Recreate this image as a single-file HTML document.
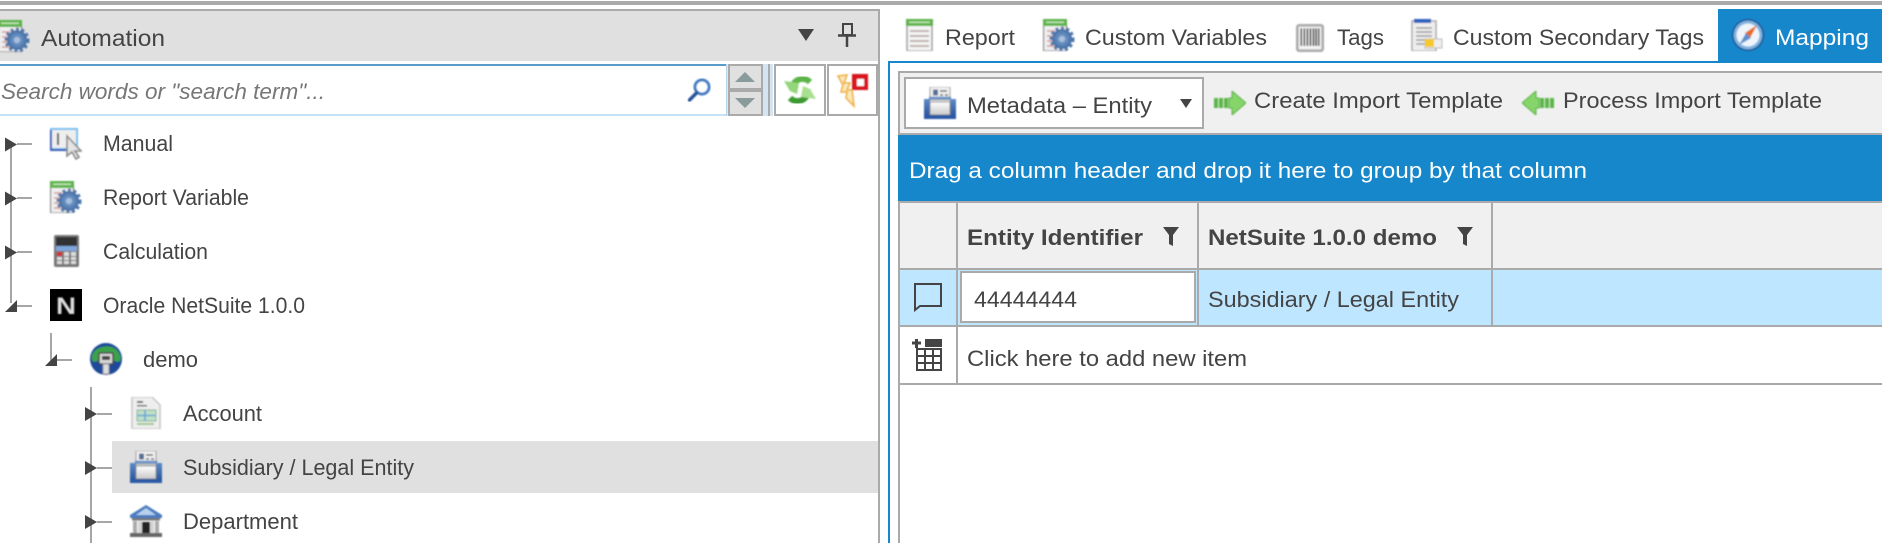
<!DOCTYPE html>
<html lang="en"><head><meta charset="utf-8"><title>Automation</title>
<style>
html,body{margin:0;padding:0;background:#fff;width:1882px;height:543px;overflow:hidden}
svg{display:block}
text{font-family:"Liberation Sans",sans-serif;font-size:22.5px;fill:#444}
.i{filter:url(#b)}
</style></head><body>
<svg width="1882" height="543" viewBox="0 0 1882 543" xmlns="http://www.w3.org/2000/svg">
<defs>
<filter id="b" x="-10%" y="-10%" width="120%" height="120%"><feGaussianBlur stdDeviation="0.7"/></filter>
<radialGradient id="gear" cx="50%" cy="50%" r="55%"><stop offset="0" stop-color="#a9c0dc"/><stop offset=".35" stop-color="#6a92c4"/><stop offset="1" stop-color="#3f689e"/></radialGradient>
<linearGradient id="gray" x1="0" y1="0" x2="0" y2="1"><stop offset="0" stop-color="#fff"/><stop offset="1" stop-color="#c8c8c8"/></linearGradient>
<linearGradient id="blu" x1="0" y1="0" x2="0" y2="1"><stop offset="0" stop-color="#5d8bc6"/><stop offset="1" stop-color="#1f4d95"/></linearGradient>
<symbol id="report" viewBox="0 0 32 32">
 <rect x="1" y="6" width="25" height="26" fill="#f4f4f4" stroke="#999" stroke-width="1.400"/><rect x="0" y="0" width="27" height="7" fill="#5cb34a"/><rect x="3" y="2.500" width="21" height="1.500" fill="#c4e6b8"/>
 <path d="M4 12h19M4 17h19M4 22h19M4 27h19" stroke="#b09a9a" stroke-width="1.500"/>
</symbol>
<symbol id="repgear" viewBox="0 0 32 32">
 <rect x="0.500" y="6" width="23" height="26" fill="#f0f0f0" stroke="#888" stroke-width="1.400"/><rect x="0" y="0" width="24" height="7" fill="#5cb34a"/><rect x="3" y="2.500" width="18" height="1.500" fill="#c4e6b8"/>
 <path d="M4 12h8M4 17h6M4 22h6M4 27h8" stroke="#d09a9a" stroke-width="1.500"/>
 <circle cx="19" cy="20" r="10" fill="url(#gear)"/><circle cx="19" cy="20" r="11" fill="none" stroke="#4a74a8" stroke-width="3" stroke-dasharray="3 2.600"/><circle cx="19" cy="20" r="3" fill="#a9bfda"/>
</symbol>
<symbol id="manual" viewBox="0 0 32 32">
 <rect x="1" y="1" width="26" height="20" fill="#eee" stroke="#78bff0" stroke-width="2"/><path d="M0 21h27v2H0zM0 2h2v20H0z" fill="#3a5fb8"/><rect x="7" y="5" width="2" height="12" fill="#555"/>
 <path d="M17 8v20l5-4 4 7 3-2-4-6h6z" fill="#e4e4e4" stroke="#888" stroke-width="1.600"/>
</symbol>
<symbol id="calc" viewBox="0 0 32 32">
 <rect x="4" y="0" width="25" height="32" rx="2" fill="#777"/><rect x="6" y="2" width="21" height="9" fill="#333"/><rect x="6" y="11" width="21" height="5" fill="#7fa6dc"/>
 <path d="M7 17h5v4H7z" fill="#d83030"/><path d="M14 17h5v4h-5zM21 17h5v4h-5zM7 22h5v3H7zM14 22h5v3h-5zM21 22h5v3h-5zM7 26h5v3H7zM14 26h5v3h-5zM21 26h5v3h-5z" fill="#ddd"/>
</symbol>
<symbol id="globe" viewBox="0 0 32 32">
 <circle cx="16" cy="16" r="16" fill="#1f4a9a"/><path d="M3 10C8 2 24 0 29 10c3 5 2 8-1 9-3-2-20-2-24 0C1 17 1 14 3 10z" fill="#3aa24a"/><rect x="9" y="10" width="14" height="11" rx="1" fill="#d8d8d8" stroke="#444" stroke-width="1.500"/><rect x="12" y="13" width="8" height="4" fill="#444"/><path d="M13 21h6v10h-6z" fill="#ddd" stroke="#889" stroke-width="1"/>
</symbol>
<symbol id="doc" viewBox="0 0 32 32">
 <path d="M2 0h20l8 8v24H2z" fill="#eee" stroke="#c4c4c4" stroke-width="1.500"/><path d="M7 4h6v2H7zM7 8h10v1.500H7z" fill="#666"/><rect x="7" y="13" width="19" height="11" fill="#bfe0c8" stroke="#7cb38c"/><path d="M7 18.500h19M15 13v11" stroke="#6aa5d8" stroke-width="1.600"/><path d="M7 27h17" stroke="#9cc98c" stroke-width="2"/>
</symbol>
<symbol id="entity" viewBox="0 0 32 32">
 <rect x="6" y="0" width="20" height="13" fill="#f2f2f2" stroke="#999"/><rect x="9" y="2.500" width="5" height="6" fill="#5a6f93"/><path d="M16 4h7M16 8h3M21 8h3" stroke="#666" stroke-width="1.500"/>
 <path d="M0 12h6v20H0zM26 12h6v20h-6z" fill="url(#blu)"/><rect x="6" y="15" width="20" height="13" fill="url(#gray)" stroke="#888"/><rect x="0" y="28" width="32" height="4" fill="#2a5aa5"/><path d="M5 11h22" stroke="#5d8bc6" stroke-width="2.500"/>
</symbol>
<symbol id="dept" viewBox="0 0 32 32">
 <path d="M16 0L0 10v3h32v-3z" fill="#4a7cc0"/><path d="M16 3L6 10h20z" fill="#b8d2ee"/><rect x="2" y="13" width="28" height="2.500" fill="#777"/>
 <path d="M3 16h4v12H3zM25 16h4v12h-4z" fill="#aaa"/><path d="M8 16h4v12H8zM20 16h4v12h-4z" fill="#d4d4d4"/><rect x="12" y="17" width="8" height="11" fill="#222"/><rect x="0" y="28" width="32" height="4" fill="#666"/>
</symbol>
<symbol id="tag" viewBox="0 0 32 32">
 <rect x="1.500" y="1.500" width="29" height="29" rx="2" fill="#f4f4f4" stroke="#aaa" stroke-width="3"/>
 <path d="M6 5v20M9.500 5v20M13 5v20M16.500 5v20M20 5v20M23 5v20M26 5v20" stroke="#333" stroke-width="1.800"/>
</symbol>
<symbol id="cst" viewBox="0 0 32 32">
 <path d="M1 2h24v30H1z" fill="#eee" stroke="#aaa" stroke-width="1.500"/><rect x="3" y="0" width="17" height="4" fill="#2f62c0"/><path d="M5 9h16M5 13h16M5 17h16M5 21h12M5 25h10" stroke="#999" stroke-width="1.500"/><rect x="14" y="20" width="17" height="9" fill="#eee" stroke="#bbb"/><rect x="14" y="20" width="9" height="8" fill="#f5c92c"/>
</symbol>
<symbol id="compass" viewBox="0 0 32 32">
 <circle cx="16" cy="16" r="16" fill="#1a4f93"/><circle cx="16" cy="16" r="14.500" fill="#7fb4e0"/><circle cx="16" cy="16" r="11.500" fill="#eef4fa"/><path d="M25 6L18 19l-5-5z" fill="#e86a22"/><path d="M7 26l7-12 5 5z" fill="#5f8fcf"/>
</symbol>
<symbol id="arrR" viewBox="0 0 32 24">
 <path d="M0 7h4v10H0zM5 7h4v10H5zM10 7h4v10h-4z" fill="#5cb648"/><path d="M15 7h3V0l14 12-14 12v-7h-3z" fill="#85d56a" stroke="#55b040" stroke-width="1"/>
</symbol>
<symbol id="refresh" viewBox="0 0 32 32">
 <path d="M8 16A10.500 10.500 0 0 1 26 8" fill="none" stroke="#5db548" stroke-width="6"/>
 <path d="M24 16A10.500 10.500 0 0 1 6 24" fill="none" stroke="#3c9a32" stroke-width="6"/>
 <path d="M0 7L15 9 13 20 6 17z" fill="#93d67c"/>
 <path d="M32 25L17 23 19 12 26 15z" fill="#a8e090"/>
</symbol>
</defs>

<!-- top bar -->
<rect x="0" y="1" width="1882" height="4" fill="#aaa"/>

<!-- left panel -->
<rect x="0" y="9" width="880" height="2" fill="#aaa"/>
<rect x="0" y="11" width="878" height="50" fill="#e0e0e0"/>
<rect x="878" y="9" width="2" height="534" fill="#aaa"/>
<rect x="0" y="61" width="878" height="3" fill="#fff"/>
<use href="#repgear" class="i" x="-2" y="20" width="32" height="32"/>
<text x="41" y="46" textLength="124" lengthAdjust="spacingAndGlyphs" style="font-size:23px">Automation</text>
<path d="M798 29h16l-8 12z" fill="#444"/>
<path d="M843 24h9v11h-9z" fill="none" stroke="#444" stroke-width="2"/><path d="M838 35.500h18" stroke="#444" stroke-width="2.500"/><path d="M847 35v12" stroke="#444" stroke-width="2.500"/>

<!-- search -->
<rect x="0" y="64" width="727" height="2" fill="#5a9bc9"/>
<rect x="0" y="114" width="727" height="2" fill="#c3e2f3"/>
<rect x="726" y="64" width="1.500" height="52" fill="#b5d5ea"/>
<text x="1" y="99" textLength="324" lengthAdjust="spacingAndGlyphs" style="font-size:22.5px;font-style:italic;fill:#777">Search words or "search term"...</text>
<g style="filter:url(#b)"><circle cx="702" cy="87" r="7" fill="#fff" stroke="#3f7cc4" stroke-width="3"/><path d="M696.500 93l-7 7" stroke="#27509a" stroke-width="3.400" stroke-linecap="round"/></g>
<rect x="729" y="65" width="33" height="24" fill="#e0e0e0" stroke="#aaa" stroke-width="2"/>
<rect x="729" y="91" width="33" height="24" fill="#e0e0e0" stroke="#aaa" stroke-width="2"/>
<path d="M735 82h20l-10-10z" fill="#8a9b9b"/><path d="M735 98h20l-10 10z" fill="#8a9b9b"/>
<rect x="763" y="64" width="5" height="52" fill="#d4e4f2"/>
<rect x="768" y="64" width="2" height="52" fill="#aaa"/>
<rect x="770" y="64" width="3" height="52" fill="#d4e4f2"/>
<rect x="775" y="65" width="50" height="50" fill="#fff" stroke="#aaa" stroke-width="2"/>
<rect x="828" y="65" width="49" height="50" fill="#fff" stroke="#aaa" stroke-width="2"/>
<use href="#refresh" class="i" x="784" y="74" width="32" height="32"/>
<g style="filter:url(#b)"><path d="M838 76l9-1-3 8 6 0-3 7 5 0 2 16-8-8 1-6-6 0 2-7z" fill="#fbe9b8" stroke="#eeb040" stroke-width="1.600"/><rect x="852" y="74" width="16" height="16" fill="#d8141c"/><rect x="857" y="79" width="7" height="7" fill="#fff"/></g>

<!-- tree -->
<g stroke="#a6a6a6" stroke-width="2" fill="none">
<path d="M11 144V303M17 144h15M17 198h15M17 252h15M17 306h15"/>
<path d="M51 333V362M57 360h15"/>
<path d="M91 387V543M97 414h15M97 468h15M97 522h15"/>
</g>
<g fill="#444">
<path d="M5 137.500l12 7-12 7zM5 191.500l12 7-12 7zM5 245.500l12 7-12 7z"/>
<path d="M5 312l12-12v12z"/>
<path d="M45 366l12-12v12z"/>
<path d="M85 407l12 7-12 7zM85 461l12 7-12 7zM85 515l12 7-12 7z"/>
</g>
<rect x="112" y="441" width="766" height="52" fill="#e0e0e0"/>
<use href="#manual" class="i" x="50" y="128" width="32" height="32"/>
<use href="#repgear" class="i" x="50" y="181" width="32" height="32"/>
<use href="#calc" class="i" x="50" y="235" width="32" height="32"/>
<rect x="50" y="289" width="32" height="32" fill="#000"/>
<text x="56" y="314" textLength="20" lengthAdjust="spacingAndGlyphs" style="font-size:24px;font-weight:bold;fill:#ddd;filter:url(#b)">N</text>
<use href="#globe" class="i" x="90" y="343" width="32" height="32"/>
<use href="#doc" class="i" x="130" y="397" width="32" height="32"/>
<use href="#entity" class="i" x="130" y="451" width="32" height="32"/>
<use href="#dept" class="i" x="130" y="505" width="32" height="32"/>
<text x="103" y="151" textLength="70" lengthAdjust="spacingAndGlyphs">Manual</text>
<text x="103" y="205" textLength="146" lengthAdjust="spacingAndGlyphs">Report Variable</text>
<text x="103" y="259" textLength="105" lengthAdjust="spacingAndGlyphs">Calculation</text>
<text x="103" y="313" textLength="202" lengthAdjust="spacingAndGlyphs">Oracle NetSuite 1.0.0</text>
<text x="143" y="367" textLength="55" lengthAdjust="spacingAndGlyphs">demo</text>
<text x="183" y="421" textLength="79" lengthAdjust="spacingAndGlyphs">Account</text>
<text x="183" y="475" textLength="231" lengthAdjust="spacingAndGlyphs">Subsidiary / Legal Entity</text>
<text x="183" y="529" textLength="115" lengthAdjust="spacingAndGlyphs">Department</text>

<!-- tabs -->
<rect x="888" y="61" width="994" height="2" fill="#1787cc"/>
<rect x="888" y="61" width="2" height="482" fill="#1787cc"/>
<rect x="1718" y="9" width="164" height="54" fill="#1787cc"/>
<use href="#report" class="i" x="906" y="19" width="32" height="32"/>
<use href="#repgear" class="i" x="1043" y="19" width="32" height="32"/>
<use href="#tag" class="i" x="1295" y="24" width="30" height="28"/>
<use href="#cst" class="i" x="1411" y="19" width="32" height="32"/>
<use href="#compass" class="i" x="1732" y="19" width="32" height="32"/>
<text x="945" y="45" textLength="70" lengthAdjust="spacingAndGlyphs">Report</text>
<text x="1085" y="45" textLength="182" lengthAdjust="spacingAndGlyphs">Custom Variables</text>
<text x="1337" y="45" textLength="47" lengthAdjust="spacingAndGlyphs">Tags</text>
<text x="1453" y="45" textLength="251" lengthAdjust="spacingAndGlyphs">Custom Secondary Tags</text>
<text x="1775" y="45" textLength="94" lengthAdjust="spacingAndGlyphs" style="fill:#fff">Mapping</text>

<!-- toolbar -->
<rect x="898" y="71" width="984" height="2" fill="#aaa"/>
<rect x="898" y="71" width="2" height="472" fill="#aaa"/>
<rect x="900" y="73" width="982" height="60" fill="#f0f0f0"/>
<rect x="898" y="133" width="984" height="2" fill="#aaa"/>
<rect x="905" y="78" width="298" height="50" fill="#fff" stroke="#aaa" stroke-width="2"/>
<use href="#entity" class="i" x="924" y="87" width="32" height="32"/>
<text x="967" y="113" textLength="185" lengthAdjust="spacingAndGlyphs">Metadata – Entity</text>
<path d="M1180 99h12l-6 9z" fill="#444"/>
<use href="#arrR" class="i" x="1214" y="91" width="32" height="24"/>
<text x="1254" y="108" textLength="249" lengthAdjust="spacingAndGlyphs">Create Import Template</text>
<g transform="translate(1554,91) scale(-1,1)"><use href="#arrR" class="i" width="32" height="24"/></g>
<text x="1563" y="108" textLength="259" lengthAdjust="spacingAndGlyphs">Process Import Template</text>

<!-- group panel -->
<rect x="898" y="135" width="984" height="66" fill="#1787cc"/>
<text x="909" y="178" textLength="678" lengthAdjust="spacingAndGlyphs" style="fill:#fff">Drag a column header and drop it here to group by that column</text>

<!-- grid -->
<rect x="900" y="201" width="982" height="2" fill="#aaa"/>
<rect x="900" y="203" width="982" height="65" fill="#f0f0f0"/>
<rect x="900" y="268" width="982" height="2" fill="#aaa"/>
<rect x="900" y="270" width="982" height="55" fill="#bfe6ff"/>
<rect x="900" y="325" width="982" height="2" fill="#aaa"/>
<rect x="900" y="383" width="982" height="2" fill="#aaa"/>
<rect x="956" y="203" width="2" height="180" fill="#aaa"/>
<rect x="1197" y="203" width="2" height="122" fill="#aaa"/>
<rect x="1491" y="203" width="2" height="122" fill="#aaa"/>
<rect x="961" y="272" width="234" height="50" fill="#fff" stroke="#aaa" stroke-width="2"/>
<text x="967" y="245" textLength="176" lengthAdjust="spacingAndGlyphs" style="font-weight:bold">Entity Identifier</text>
<text x="1208" y="245" textLength="229" lengthAdjust="spacingAndGlyphs" style="font-weight:bold">NetSuite 1.0.0 demo</text>
<path d="M1163 227h16l-6 8v11l-4-2v-9z" fill="#444"/>
<path d="M1457 227h16l-6 8v11l-4-2v-9z" fill="#444"/>
<path d="M915 284h26v22h-21l-5 4z" fill="none" stroke="#444" stroke-width="2"/>
<text x="974" y="307" textLength="103" lengthAdjust="spacingAndGlyphs">44444444</text>
<text x="1208" y="307" textLength="251" lengthAdjust="spacingAndGlyphs">Subsidiary / Legal Entity</text>
<g>
<rect x="925" y="339" width="17" height="8" fill="#444"/>
<path d="M912 343h9M916.500 339v9" stroke="#444" stroke-width="3"/>
<path d="M917 349h24v21h-24zM917 356h24M917 363h24M925 349v21M933 349v21" fill="none" stroke="#444" stroke-width="2"/>
</g>
<text x="967" y="366" textLength="280" lengthAdjust="spacingAndGlyphs">Click here to add new item</text>
</svg>
</body></html>
